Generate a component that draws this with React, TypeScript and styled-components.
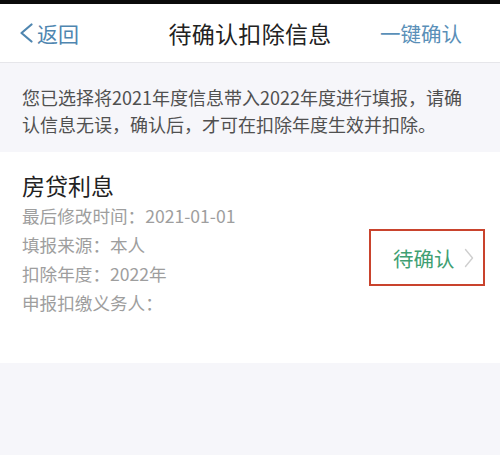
import React from "react";
import styled, { createGlobalStyle } from "styled-components";

const Global = createGlobalStyle`
  html, body { margin: 0; padding: 0; }
  body {
    width: 500px;
    height: 455px;
    overflow: hidden;
    background: #f6f6fa;
    font-family: "Noto Sans CJK SC", "Noto Sans", sans-serif;
  }
`;

const Page = styled.div`
  width: 500px;
  height: 455px;
  display: flex;
  flex-direction: column;
  background: #f6f6fa;
`;

const StatusStrip = styled.div`
  height: 4px;
  background: #0a0a0a;
`;

const Header = styled.header`
  height: 58px;
  background: #ffffff;
  border-bottom: 1px solid #e6e6ea;
  display: grid;
  grid-template-columns: 1fr auto 1fr;
  align-items: center;
  padding: 0 20px;
`;

const Back = styled.div`
  display: flex;
  align-items: center;
  gap: 4px;
  color: #4f86b0;
  font-size: 21px;
  justify-self: start;
`;

const Title = styled.div`
  color: #222222;
  font-size: 23px;
  letter-spacing: 0.3px;
`;

const Action = styled.div`
  justify-self: end;
  margin-right: 18px;
  color: #5a8fb8;
  font-size: 20.5px;
`;

const Notice = styled.div`
  height: 89px;
  box-sizing: border-box;
  padding: 21px 22px 0 22px;
  color: #505050;
  font-size: 18px;
  line-height: 27px;
`;

const Card = styled.section`
  height: 211px;
  box-sizing: border-box;
  background: #ffffff;
  display: flex;
  align-items: center;
  justify-content: space-between;
  padding: 0 15px 0 22px;
`;

const Info = styled.div`
  display: flex;
  flex-direction: column;
  align-self: flex-start;
  padding-top: 18px;
`;

const ItemTitle = styled.div`
  color: #222222;
  font-size: 23px;
  line-height: 30px;
  margin-bottom: 1px;
`;

const Detail = styled.div`
  color: #9e9e9e;
  font-size: 17.6px;
  line-height: 29px;
`;

const StatusBox = styled.div`
  width: 116px;
  height: 57px;
  box-sizing: border-box;
  border: 2px solid #c9432d;
  display: flex;
  align-items: center;
  padding: 0 8px 0 22px;
  gap: 9px;
`;

const StatusText = styled.span`
  color: #3f9f73;
  font-size: 20.5px;
`;

const Chevron = ({ color, w, h }: { color: string; w: number; h: number }) => (
  <svg width={w} height={h} viewBox={`0 0 ${w} ${h}`} fill="none">
    <polyline
      points={`${w - 1.5},1.5 1.5,${h / 2} ${w - 1.5},${h - 1.5}`}
      stroke={color}
      strokeWidth="2.2"
      strokeLinecap="round"
      strokeLinejoin="round"
    />
  </svg>
);

const RightChevron = ({ color, w, h }: { color: string; w: number; h: number }) => (
  <svg width={w} height={h} viewBox={`0 0 ${w} ${h}`} fill="none">
    <polyline
      points={`1.5,1.5 ${w - 1.5},${h / 2} 1.5,${h - 1.5}`}
      stroke={color}
      strokeWidth="1.4"
      strokeLinecap="round"
      strokeLinejoin="round"
    />
  </svg>
);

const details = [
  "最后修改时间：2021-01-01",
  "填报来源：本人",
  "扣除年度：2022年",
  "申报扣缴义务人：",
];

export default function App() {
  return (
    <>
      <Global />
      <Page>
        <StatusStrip />
        <Header>
          <Back>
            <Chevron color="#4f86b0" w={13} h={20} />
            <span>返回</span>
          </Back>
          <Title>待确认扣除信息</Title>
          <Action>一键确认</Action>
        </Header>
        <Notice>
          您已选择将2021年度信息带入2022年度进行填报，请确认信息无误，确认后，才可在扣除年度生效并扣除。
        </Notice>
        <Card>
          <Info>
            <ItemTitle>房贷利息</ItemTitle>
            {details.map((d) => (
              <Detail key={d}>{d}</Detail>
            ))}
          </Info>
          <StatusBox>
            <StatusText>待确认</StatusText>
            <RightChevron color="#cfcfcf" w={10} h={20} />
          </StatusBox>
        </Card>
      </Page>
    </>
  );
}
